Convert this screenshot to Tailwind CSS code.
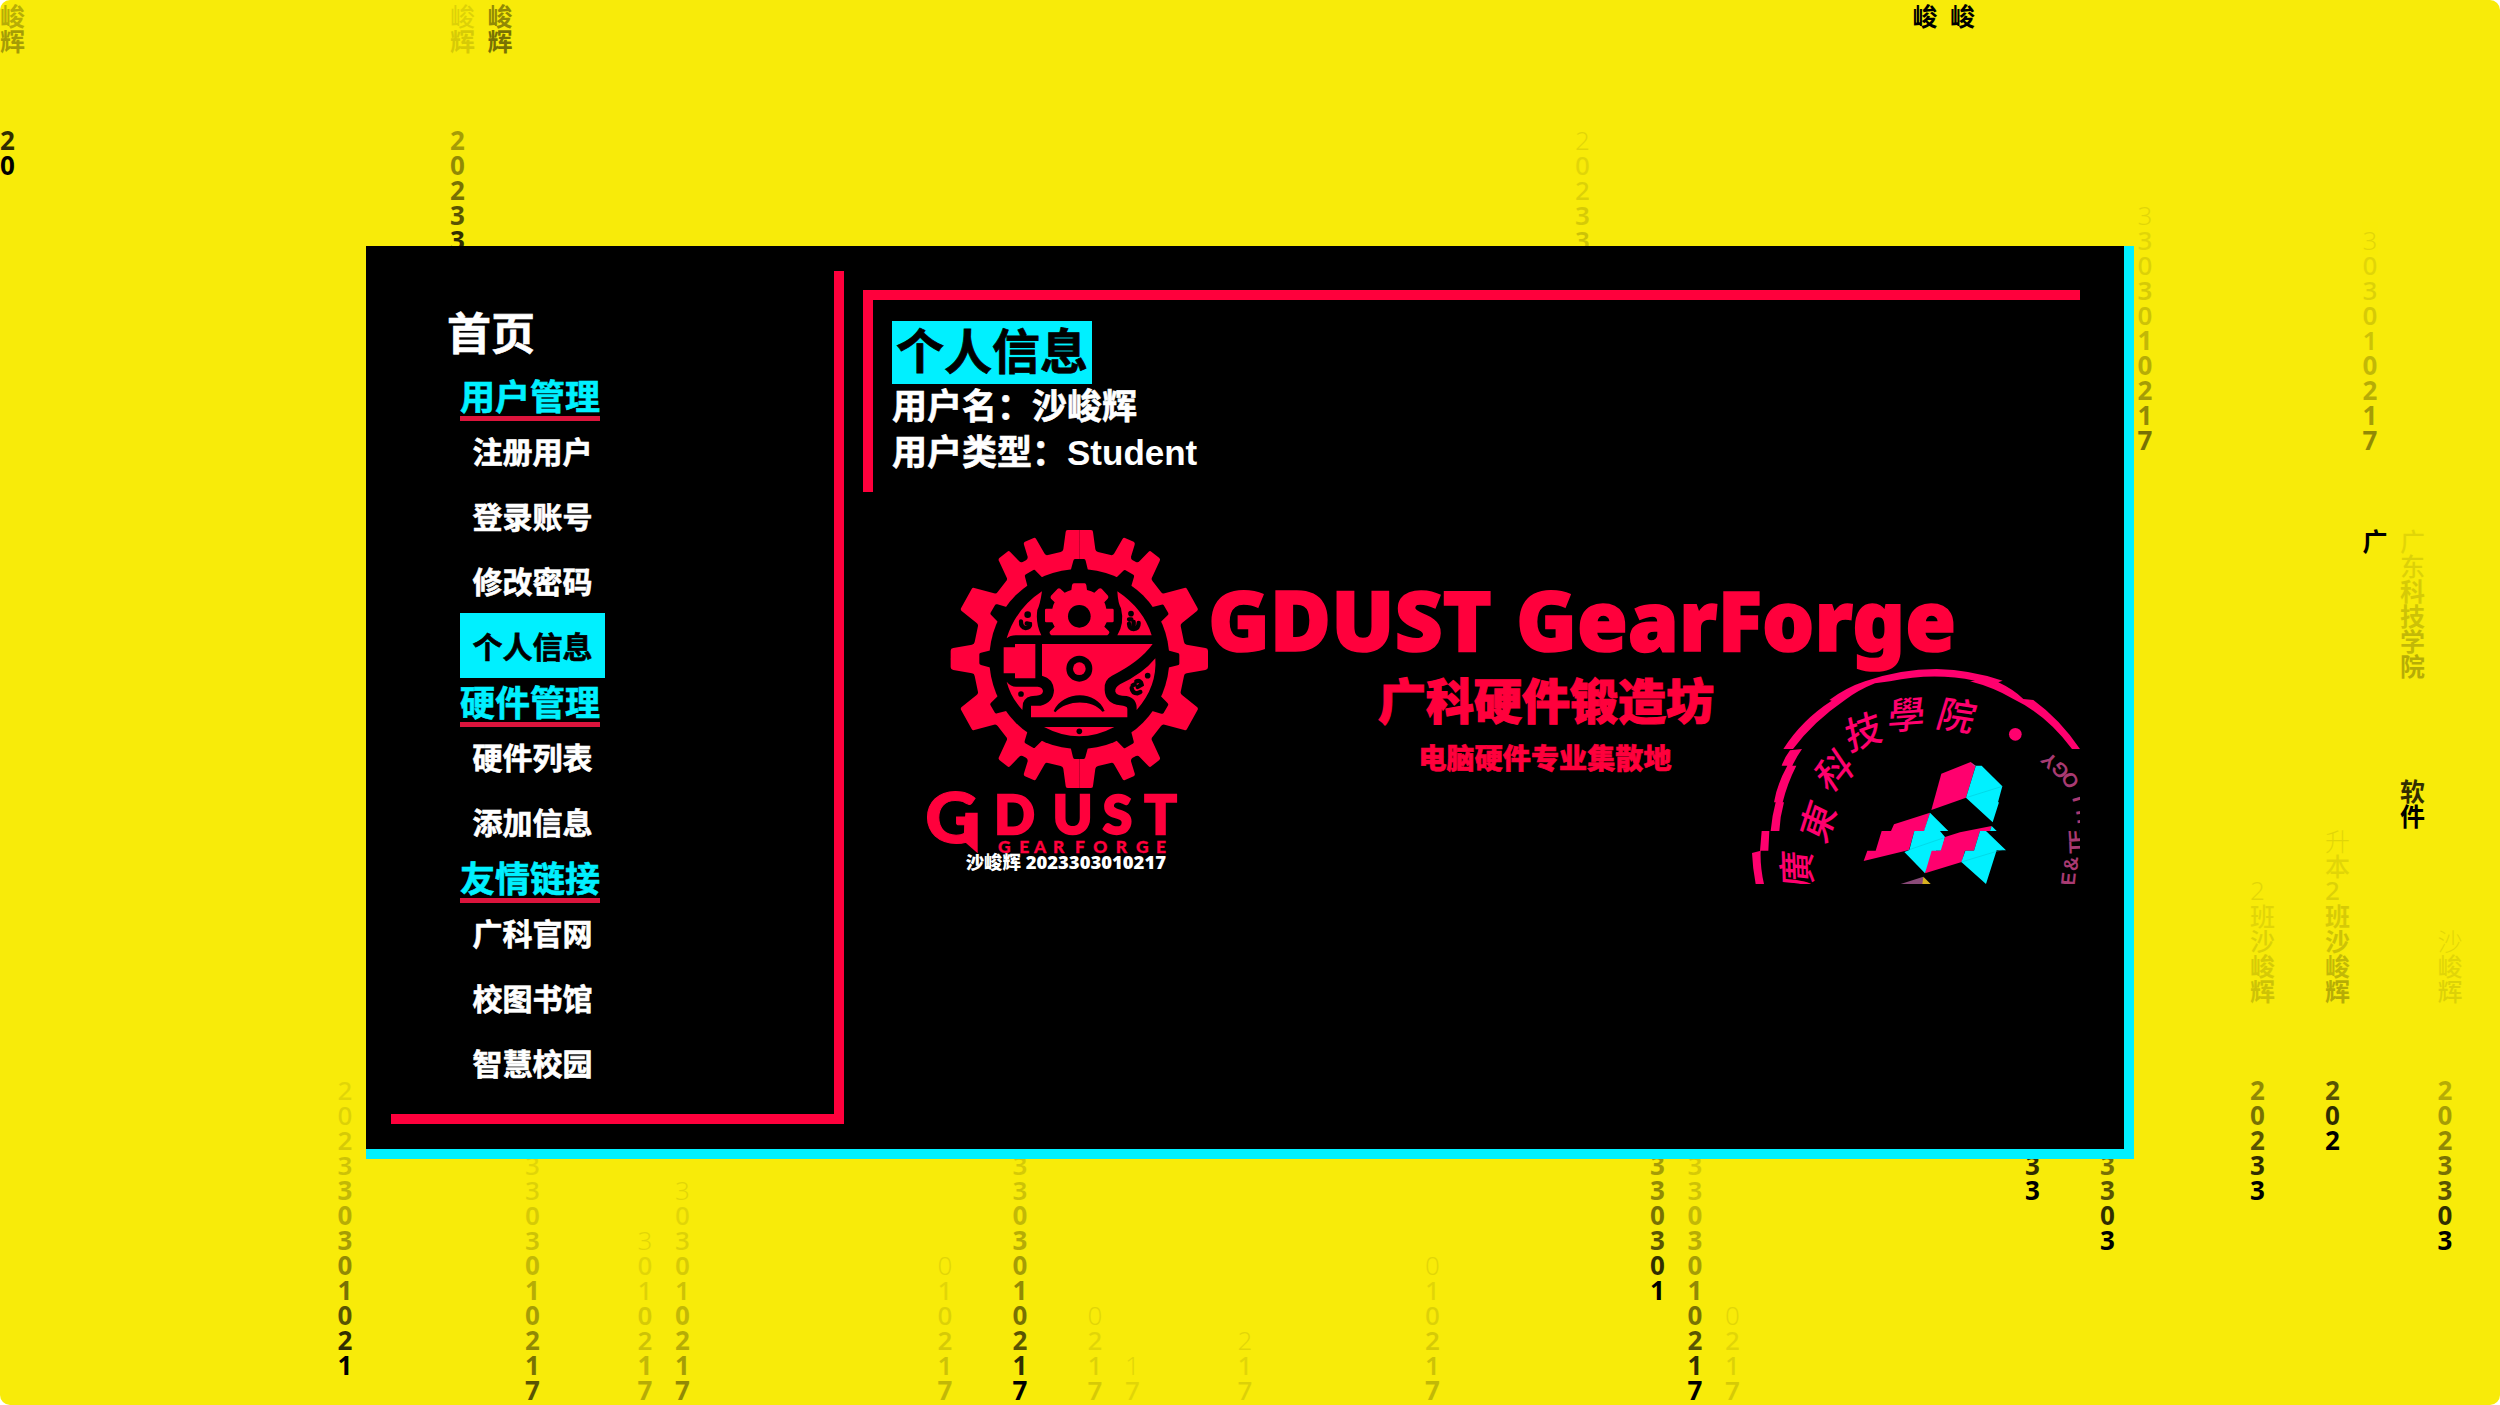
<!DOCTYPE html>
<html lang="zh-CN">
<head>
<meta charset="utf-8">
<title>GDUST GearForge</title>
<script src="https://cdn.jsdelivr.net/npm/@tailwindcss/browser@4"></script>
</head>
<body class="bg-white overflow-hidden">
<div class="relative h-[1405px] w-[2500px] overflow-hidden rounded-[10px] bg-[#f8eb09] font-['Noto_Sans','Noto_Sans_CJK_SC',sans-serif]">
  <!-- falling character rain -->
  <div id="rain" class="absolute inset-0 overflow-hidden text-black"></div>

  <main class="relative ml-[366px] mt-[246px] flex h-[913px] w-[1768px] items-start gap-[19px] border-r-[10px] border-b-[10px] border-[#00f0ff] bg-black pl-[25px] pt-[25px] font-bold text-white font-['Liberation_Sans','Noto_Sans_CJK_SC',sans-serif]">
    <nav class="h-[853px] w-[453px] shrink-0 border-r-[10px] border-b-[10px] border-[#ff003c] pt-[30px] pl-[56px] [-webkit-text-stroke:0.6px]">
      <h1 class="flex h-[71px] items-center pb-[4px] text-[44px] leading-none">首页</h1>
      <div class="flex flex-col items-start pl-[13px]">
        <h2 class="h-[46px]"><span class="block h-[49px] border-b-[5px] border-[#dc143c] text-[35px] leading-[52px] text-[#00f0ff]">用户管理</span></h2>
        <a class="h-[65px] px-[12.5px] pt-[2px] text-[30px] leading-[65px]">注册用户</a>
        <a class="h-[65px] px-[12.5px] pt-[2px] text-[30px] leading-[65px]">登录账号</a>
        <a class="h-[65px] px-[12.5px] pt-[2px] text-[30px] leading-[65px]">修改密码</a>
        <a class="h-[65px] bg-[#00f0ff] px-[12.5px] pt-[2px] text-[30px] leading-[65px] text-black">个人信息</a>
        <h2 class="h-[46px]"><span class="block h-[49px] border-b-[5px] border-[#dc143c] text-[35px] leading-[52px] text-[#00f0ff]">硬件管理</span></h2>
        <a class="h-[65px] px-[12.5px] pt-[2px] text-[30px] leading-[65px]">硬件列表</a>
        <a class="h-[65px] px-[12.5px] pt-[2px] text-[30px] leading-[65px]">添加信息</a>
        <h2 class="h-[46px]"><span class="block h-[49px] border-b-[5px] border-[#dc143c] text-[35px] leading-[52px] text-[#00f0ff]">友情链接</span></h2>
        <a class="h-[65px] px-[12.5px] pt-[2px] text-[30px] leading-[65px]">广科官网</a>
        <a class="h-[65px] px-[12.5px] pt-[2px] text-[30px] leading-[65px]">校图书馆</a>
        <a class="h-[65px] px-[12.5px] pt-[2px] text-[30px] leading-[65px]">智慧校园</a>
      </div>
    </nav>

    <section class="mt-[19px] w-[1217px]">
      <div class="flex h-[202px] flex-col items-start border-t-[10px] border-l-[10px] border-[#ff003c] pt-[21px] pl-[19px]">
        <h2 class="h-[63px] bg-[#00f0ff] px-[4px] text-[48px] leading-[63px] text-black [-webkit-text-stroke:0.8px]">个人信息</h2>
        <p class="h-[46px] text-[35px] leading-[46px]"><span class="[-webkit-text-stroke:0.6px]">用户名：沙峻辉</span></p>
        <p class="h-[46px] text-[35px] leading-[46px]"><span class="[-webkit-text-stroke:0.6px]">用户类型：</span>Student</p>
      </div>
      <svg class="mt-[18px] block h-[374px] w-[1217px] overflow-hidden" viewBox="863 510 1217 374">
        <!-- gear emblem, drawn at three units per pixel -->
        <g transform="translate(910 510) scale(.333333)" fill="#ff003c">
          <path id="q" d="M508 447V60H543Q549 60 549 66L556 118Q557 124 564 126L602 135Q610 137 613 130L638 86Q641 82 645 84L671 95Q676 98 674 104L663 140Q662 147 668 151L678 156Q684 159 689 153L716 125Q720 121 724 125L748 144Q752 148 749 153L725 205Q724 210 728 214L753 246Q757 252 764 250L823 234Q828 232 831 237L863 295Q865 300 861 303L817 338Q811 342 812 348L822 396Q823 403 830 404L886 414Q894 415 894 422V448Z"/>
          <use href="#q" transform="matrix(-1 0 0 1 1016 0)"/>
          <use href="#q" transform="matrix(1 0 0 -1 0 894)"/>
          <use href="#q" transform="matrix(-1 0 0 -1 1016 894)"/>
          <g fill="#000">
            <circle cx="508" cy="447" r="270"/>
            <path id="n" d="M481 185L490 152Q491 147 495 147H522Q526 147 527 152L535 185Z"/>
            <use href="#n" transform="rotate(30 508 447)"/><use href="#n" transform="rotate(60 508 447)"/>
            <use href="#n" transform="rotate(90 508 447)"/><use href="#n" transform="rotate(120 508 447)"/>
            <use href="#n" transform="rotate(150 508 447)"/><use href="#n" transform="rotate(180 508 447)"/>
            <use href="#n" transform="rotate(210 508 447)"/><use href="#n" transform="rotate(240 508 447)"/>
            <use href="#n" transform="rotate(270 508 447)"/><use href="#n" transform="rotate(300 508 447)"/>
            <use href="#n" transform="rotate(330 508 447)"/>
          </g>
          <path d="M396 244Q390 285 382 300Q376 340 394 376H318Q300 376 290 385Q318 295 396 244Z"/>
          <path d="M622 244Q624 280 633 295Q644 340 622 376H725Q700 296 622 244Z"/>
          <path d="M486 226Q487 220 492 220H524Q528 220 529 226L531 240Q545 243 553 248L566 236Q571 233 575 236L594 257Q597 262 593 266L583 277Q587 285 589 296H607Q611 296 611 300V333Q611 337 607 337H590L583 350L597 364Q600 368 596 372L592 376H424L420 372Q417 368 420 364L434 350L427 337H409Q405 337 405 333V300Q405 296 409 296H427Q429 285 434 277L423 266Q420 262 423 257L443 236Q447 233 451 236L464 248Q473 243 484 240Z"/>
          <circle cx="508" cy="319" r="34" fill="#000"/>
          <path d="M281 412H315V402H376V505H315V490H281Z"/>
          <path d="M396 402H728Q690 455 606 497Q580 510 584 540Q586 580 630 586Q652 588 652 596V622H363V587H392Q430 578 432 541Q430 505 396 497Z"/>
          <path d="M290 515Q302 530 318 530H383Q399 532 399 544Q397 557 378 557Q347 556 339 579L337 600Q302 562 290 515Z"/>
          <path d="M736 445Q700 490 630 523Q614 533 616 545Q620 558 650 558Q682 564 680 600Q742 530 736 445Z"/>
          <path d="M402 651H613Q508 707 402 651Z"/>
          <g fill="#000">
            <circle cx="508" cy="476" r="39"/>
            <path d="M431 603C460 540 560 540 584 603L577 605C548 568 470 568 436 607Z"/>
            <circle cx="333" cy="552" r="8.500"/><circle cx="508" cy="664" r="8.500"/>
            <circle cx="663" cy="311" r="8.500"/><circle cx="713" cy="497" r="8.500"/>
            <circle cx="353" cy="314" r="10"/>
          </g>
          <circle cx="508" cy="476" r="19"/>
          <g fill="none" stroke="#000" stroke-width="13" stroke-linecap="round">
            <path d="M333 334Q332 352 347 354Q362 352 360 342L350 340"/>
            <path d="M657 341Q658 357 671 357Q686 356 686 339M657 328L664 328M671 336V344"/>
            <path d="M665 534Q667 550 682 550L691 546M668 526L674 523M679 514Q693 510 695 524L683 531"/>
          </g>
          <!-- wordmark under the gear -->
          <path d="M166 908H203V1030L160 992Z"/>
          <g font-family="Lato, sans-serif" font-weight="900" stroke="#ff003c">
            <text x="45" y="999" font-size="214" textLength="160" lengthAdjust="spacingAndGlyphs" stroke-width="3">G</text>
            <text x="314 488 622 752" y="973" font-size="160" stroke-width="7" text-anchor="middle">DUST</text>
            <text x="283 343 390 446 510 571 634 697 753" y="1028" font-size="52" stroke-width="1" text-anchor="middle">GEARFORGE</text>
          </g>
          <text x="167" y="1077" font-size="54" font-weight="900" fill="#fff" textLength="601" lengthAdjust="spacingAndGlyphs" font-family="'Noto Sans','Noto Sans CJK SC',sans-serif">沙峻辉 2023303010217</text>
        </g>

        <g fill="#ff003c" stroke="#ff003c" font-weight="900" font-family="'Noto Sans','Noto Sans CJK SC',sans-serif">
          <text x="1208" y="650.500" font-size="83" stroke-width="1.600" textLength="284" lengthAdjust="spacingAndGlyphs">GDUST</text>
          <text x="1516" y="650.500" font-size="83" stroke-width="1.600" textLength="440" lengthAdjust="spacingAndGlyphs">GearForge</text>
          <text x="1378" y="718.500" font-size="48" stroke-width="1.200" textLength="336">广科硬件锻造坊</text>
          <text x="1418.500" y="768.500" font-size="28" stroke-width=".6" textLength="253">电脑硬件专业集散地</text>
        </g>

        <!-- school seal with sliced offsets -->
        <g transform="translate(1730 650) scale(.333333)" fill="#ff006e">
          <path d="M405 94Q510 57 620 57Q725 60 818 92L805 97Q850 118 880 147L910 150Q990 208 1050 297H1026Q950 195 850 147Q790 112 720 94L735 92Q610 66 480 94L435 100Q385 120 345 150Q250 215 189 297H160Q215 210 305 152L298 150Q350 112 405 94Z"/>
          <path d="M180 301L216 297Q200 320 187 347H155Q164 322 180 301ZM172 347H199Q172 400 158 457H132Q142 400 172 347ZM137 457H162Q150 500 148 543H122Q126 498 137 457ZM95 543H118L115 602H90ZM66 609L92 602Q90 650 102 702H77Q68 655 66 609Z"/>
          <circle cx="856" cy="253" r="19"/>
          <g font-family="'Noto Sans CJK TC',sans-serif" font-weight="500" font-size="112" text-anchor="middle">
            <text transform="translate(680 197) rotate(9) skewX(-8)" y="41">院</text>
            <text transform="translate(530 195) rotate(-4) skewX(-8)" y="41">學</text>
            <text transform="translate(400 245) rotate(-20) skewX(-8)" y="41">技</text>
            <text transform="translate(313 362) rotate(-42) skewX(-8)" y="41">科</text>
            <text transform="translate(264 514) rotate(-72) skewX(-8)" y="41">東</text>
            <text transform="translate(201 658) rotate(-92) skewX(-8)" y="41">廣</text>
          </g>
          <g font-family="'Liberation Sans',sans-serif" font-size="60" fill="#a83a72" text-anchor="middle">
            <text transform="translate(1015 687) rotate(-84)" y="21">E</text>
            <text transform="translate(1022 641) rotate(-88)" y="21">&amp;</text>
            <text transform="translate(1038 592) rotate(-92)" y="21">T</text>
            <text transform="translate(1037 558) rotate(-94)" y="21">E</text>
            <text transform="translate(1061 500) rotate(-98)" y="21">H</text>
            <text transform="translate(1045 436) rotate(-106)" y="21">L</text>
            <text transform="translate(1020 390) rotate(-116)" y="21">O</text>
            <text transform="translate(990 360) rotate(-126)" y="21">G</text>
            <text transform="translate(957 332) rotate(-136)" y="21">Y</text>
          </g>
          <path d="M634 371L722 336L737 347L708 443L604 480Z"/>
          <path fill="#00f0ff" d="M720 336L733 347H755L817 409L804 457H807L788 517L708 443L737 349Z"/>
          <path d="M492 523L600 488L583 543H553L537 600L401 633L412 602H437L455 543H483Z"/>
          <path fill="#00f0ff" d="M600 488L655 543H630L645 561L635 602H618L585 670L523 606L538 600L553 543H582Z"/>
          <path d="M645 561L690 547L785 528L780 543H750L732 602H705L695 636L585 670L605 602H632Z"/>
          <path fill="#00f0ff" d="M785 528L800 543H768L828 601H800L768 702L694 636L706 602H732L750 543H780Z"/>
          <path d="M708 443L817 409M535 600L640 564M694 636L820 598" stroke="#05b8c4" stroke-width="1.200" fill="none"/>
          <path fill="#8a4a78" d="M512 702L580 680V702Z"/>
          <path fill="#d8b020" d="M580 680L602 702H577Z"/>
        </g>
      </svg>
    </section>
  </main>
</div>
<script>
  // Each grid row always shows the same character; a trail fades out over 12 steps.
  const rows = {};
  const put = (start, s) => [...s].forEach((c, i) => { rows[start + i] = c; });
  put(1, '峻辉'); put(6, '2023303010217'); put(22, '广东科技学院'); put(32, '软件升本2班沙峻辉'); put(44, '2023303010217');
  // [column, head row]
  const trails = [[0,7],[9,55],[12,11],[13,5],[14,58],[17,62],[18,60],[25,63],[27,56],[29,65],[30,67],[33,66],[38,63],
    [42,18],[44,52],[45,56],[46,65],[51,1],[52,1],[54,48],[56,50],[57,21],[60,48],[62,46],[63,22],[64,33],[65,50]];
  const rain = document.getElementById('rain');
  for (const [col, head] of trails) {
    const first = Math.max(1, head - 12);
    const el = document.createElement('div');
    el.className = 'absolute flex flex-col';
    el.style.left = col * 37.5 + 'px';
    el.style.top = first * 25 - 22 + 'px';
    for (let r = first; r <= Math.min(head, 56); r++) {
      const age = head - r;
      const ch = rows[r] || ' ';
      const s = document.createElement('span');
      s.className = /\d/.test(ch)
        ? 'block h-[25px] whitespace-pre text-[26px] leading-[24px]'
        : 'block h-[25px] whitespace-pre text-[25px] leading-[27px]';
      s.style.opacity = Math.max(0.085, Math.pow(0.8, age)).toFixed(3);
      s.style.fontWeight = age > 11 ? 300 : age > 9 ? 500 : age > 7 ? 600 : 700;
      s.textContent = ch;
      el.append(s);
    }
    rain.append(el);
  }
</script>
</body>
</html>
